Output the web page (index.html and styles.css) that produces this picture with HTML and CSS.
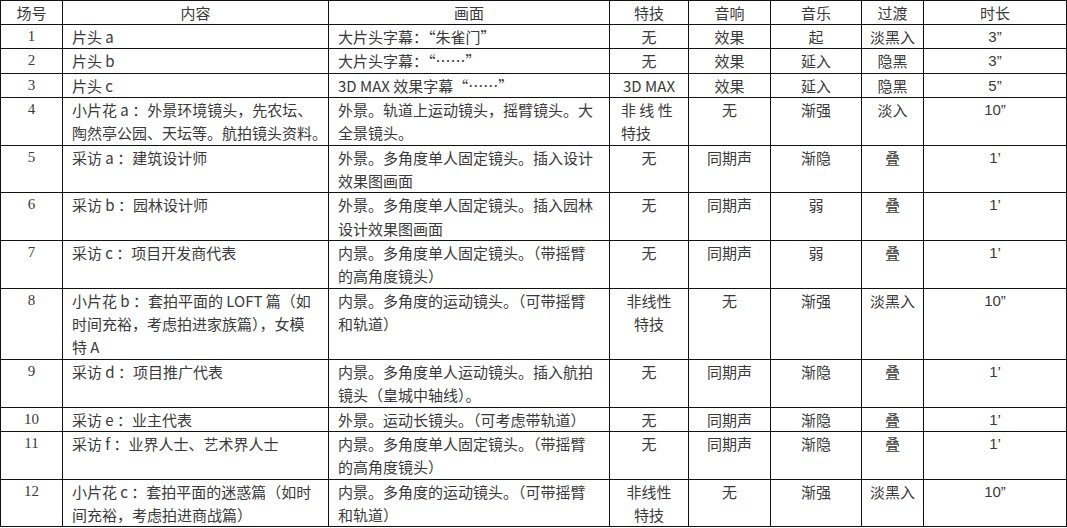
FILE: index.html
```html
<!DOCTYPE html>
<html lang="zh-CN">
<head>
<meta charset="utf-8">
<title>分镜头脚本</title>
<link rel="stylesheet" href="styles.css">
</head>
<body>
<table class="script">
  <colgroup>
    <col class="c-no">
    <col class="c-content">
    <col class="c-scene">
    <col class="c-fx">
    <col class="c-sound">
    <col class="c-music">
    <col class="c-trans">
    <col class="c-time">
  </colgroup>
  <thead>
    <tr class="head">
      <th>场号</th><th>内容</th><th>画面</th><th>特技</th><th>音响</th><th>音乐</th><th>过渡</th><th>时长</th>
    </tr>
  </thead>
  <tbody>
    <tr>
      <td class="no">1</td><td class="txt">片头 a</td><td class="txt">大片头字幕：“朱雀门”</td>
      <td class="ctr">无</td><td class="ctr">效果</td><td class="ctr">起</td><td class="ctr">淡黑入</td><td class="time">3”</td>
    </tr>
    <tr>
      <td class="no">2</td><td class="txt">片头 b</td><td class="txt">大片头字幕：“……”</td>
      <td class="ctr">无</td><td class="ctr">效果</td><td class="ctr">延入</td><td class="ctr">隐黑</td><td class="time">3”</td>
    </tr>
    <tr>
      <td class="no">3</td><td class="txt">片头 c</td><td class="txt">3D MAX 效果字幕“……”</td>
      <td class="ctr">3D MAX</td><td class="ctr">效果</td><td class="ctr">延入</td><td class="ctr">隐黑</td><td class="time">5”</td>
    </tr>
    <tr>
      <td class="no">4</td><td class="txt">小片花 a ：外景环境镜头，先农坛、<br>陶然亭公园、天坛等。航拍镜头资料。</td><td class="txt">外景。轨道上运动镜头，摇臂镜头。大<br>全景镜头。</td>
      <td class="left">非 线 性<br>特技</td><td class="ctr">无</td><td class="ctr">渐强</td><td class="ctr">淡入</td><td class="time">10”</td>
    </tr>
    <tr>
      <td class="no">5</td><td class="txt">采访 a ：建筑设计师</td><td class="txt">外景。多角度单人固定镜头。插入设计<br>效果图画面</td>
      <td class="ctr">无</td><td class="ctr">同期声</td><td class="ctr">渐隐</td><td class="ctr">叠</td><td class="time">1’</td>
    </tr>
    <tr>
      <td class="no">6</td><td class="txt">采访 b ：园林设计师</td><td class="txt">外景。多角度单人固定镜头。插入园林<br>设计效果图画面</td>
      <td class="ctr">无</td><td class="ctr">同期声</td><td class="ctr">弱</td><td class="ctr">叠</td><td class="time">1’</td>
    </tr>
    <tr>
      <td class="no">7</td><td class="txt">采访 c ：项目开发商代表</td><td class="txt">内景。多角度单人固定镜头。（带摇臂<br>的高角度镜头）</td>
      <td class="ctr">无</td><td class="ctr">同期声</td><td class="ctr">弱</td><td class="ctr">叠</td><td class="time">1’</td>
    </tr>
    <tr>
      <td class="no">8</td><td class="txt">小片花 b ：套拍平面的 LOFT 篇（如<br>时间充裕，考虑拍进家族篇），女模<br>特 A</td><td class="txt">内景。多角度的运动镜头。（可带摇臂<br>和轨道）</td>
      <td class="ctr">非线性<br>特技</td><td class="ctr">无</td><td class="ctr">渐强</td><td class="ctr">淡黑入</td><td class="time">10”</td>
    </tr>
    <tr>
      <td class="no">9</td><td class="txt">采访 d ：项目推广代表</td><td class="txt">内景。多角度单人运动镜头。插入航拍<br>镜头（皇城中轴线）。</td>
      <td class="ctr">无</td><td class="ctr">同期声</td><td class="ctr">渐隐</td><td class="ctr">叠</td><td class="time">1’</td>
    </tr>
    <tr>
      <td class="no">10</td><td class="txt">采访 e ：业主代表</td><td class="txt">外景。运动长镜头。（可考虑带轨道）</td>
      <td class="ctr">无</td><td class="ctr">同期声</td><td class="ctr">渐隐</td><td class="ctr">叠</td><td class="time">1’</td>
    </tr>
    <tr>
      <td class="no">11</td><td class="txt">采访 f ：业界人士、艺术界人士</td><td class="txt">内景。多角度单人固定镜头。（带摇臂<br>的高角度镜头）</td>
      <td class="ctr">无</td><td class="ctr">同期声</td><td class="ctr">渐隐</td><td class="ctr">叠</td><td class="time">1’</td>
    </tr>
    <tr>
      <td class="no">12</td><td class="txt">小片花 c ：套拍平面的迷惑篇（如时<br>间充裕，考虑拍进商战篇）</td><td class="txt">内景。多角度的运动镜头。（可带摇臂<br>和轨道）</td>
      <td class="ctr">非线性<br>特技</td><td class="ctr">无</td><td class="ctr">渐强</td><td class="ctr">淡黑入</td><td class="time">10”</td>
    </tr>
  </tbody>
</table>
</body>
</html>
```
FILE: styles.css
```css
html, body {
  margin: 0;
  padding: 0;
  background: #ffffff;
}

body {
  font-family: "Noto Sans CJK SC", "Noto Sans", sans-serif;
  font-size: 15px;
  color: #3a3a3a;
}

.script {
  border-collapse: collapse;
  table-layout: fixed;
  width: 1066px;
}

.c-no { width: 62px; }
.c-content { width: 266px; }
.c-scene { width: 281px; }
.c-fx { width: 79px; }
.c-sound { width: 82px; }
.c-music { width: 91px; }
.c-trans { width: 62px; }
.c-time { width: 143px; }

.script th,
.script td {
  border: 1px solid #111111;
  padding: 0 3px;
  line-height: 23.35px;
  vertical-align: top;
  white-space: nowrap;
  overflow: hidden;
}

.script th {
  font-weight: normal;
  text-align: center;
  vertical-align: middle;
  height: 23px;
  line-height: 22px;
}

.script .no {
  text-align: center;
  font-family: "Liberation Serif", "Noto Sans CJK SC", serif;
}

.script .txt {
  text-align: left;
  padding-left: 9px;
}

.script .ctr {
  text-align: center;
}

.script .left {
  text-align: left;
  padding-left: 11px;
}

.script .time {
  text-align: center;
  font-family: "Liberation Sans", "Noto Sans CJK SC", sans-serif;
}
```
